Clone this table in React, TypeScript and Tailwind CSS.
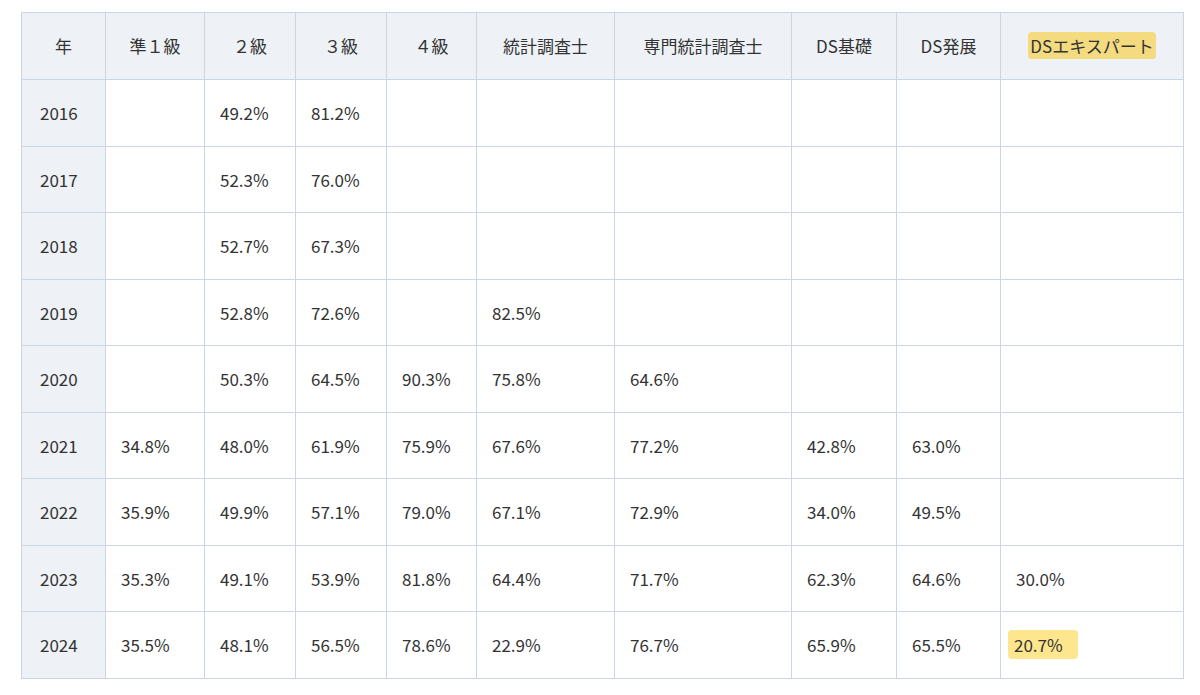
const headers = ["年", "準１級", "２級", "３級", "４級", "統計調査士", "専門統計調査士", "DS基礎", "DS発展", "DSエキスパート"];
const widths = ["w-[84px]", "w-[99px]", "w-[91px]", "w-[91px]", "w-[90px]", "w-[138px]", "w-[177px]", "w-[105px]", "w-[104px]", "w-[183px]"];

const rows: [string, ...string[]][] = [
  ["2016", "", "49.2%", "81.2%", "", "", "", "", "", ""],
  ["2017", "", "52.3%", "76.0%", "", "", "", "", "", ""],
  ["2018", "", "52.7%", "67.3%", "", "", "", "", "", ""],
  ["2019", "", "52.8%", "72.6%", "", "82.5%", "", "", "", ""],
  ["2020", "", "50.3%", "64.5%", "90.3%", "75.8%", "64.6%", "", "", ""],
  ["2021", "34.8%", "48.0%", "61.9%", "75.9%", "67.6%", "77.2%", "42.8%", "63.0%", ""],
  ["2022", "35.9%", "49.9%", "57.1%", "79.0%", "67.1%", "72.9%", "34.0%", "49.5%", ""],
  ["2023", "35.3%", "49.1%", "53.9%", "81.8%", "64.4%", "71.7%", "62.3%", "64.6%", "30.0%"],
  ["2024", "35.5%", "48.1%", "56.5%", "78.6%", "22.9%", "76.7%", "65.9%", "65.5%", "20.7%"],
];

export default function App() {
  return (
    <div className="min-h-screen bg-white pt-[12px] pl-[21px] font-['Noto_Sans_CJK_JP','Noto_Sans',sans-serif] text-[17px] text-[#333]">
      <table className="table-fixed border-collapse w-[1162px]">
        <colgroup>
          {widths.map((w, i) => (
            <col key={i} className={w} />
          ))}
        </colgroup>
        <thead>
          <tr className="h-[67px] bg-[#eef2f6]">
            {headers.map((h, i) => (
              <th key={i} className="border border-[#c9d7e4] font-normal text-center">
                {i === 9 ? (
                  <span className="rounded-[4px] bg-[#f5db80] px-[2px] py-[1px]">{h}</span>
                ) : (
                  h
                )}
              </th>
            ))}
          </tr>
        </thead>
        <tbody>
          {rows.map((r, ri) => (
            <tr key={ri} className="h-[66.5px]">
              {r.map((c, ci) => (
                <td
                  key={ci}
                  className={
                    ci === 0
                      ? "border border-[#c9d7e4] bg-[#eef2f6] pl-[18px]"
                      : "border border-[#c9d7e4] pl-[15px]"
                  }
                >
                  {ri === 8 && ci === 9 ? (
                    <span className="rounded-[4px] bg-[#fde68e] pl-[6px] pr-[15px] py-[2px] -ml-[8px]">{c}</span>
                  ) : (
                    c
                  )}
                </td>
              ))}
            </tr>
          ))}
        </tbody>
      </table>
    </div>
  );
}
